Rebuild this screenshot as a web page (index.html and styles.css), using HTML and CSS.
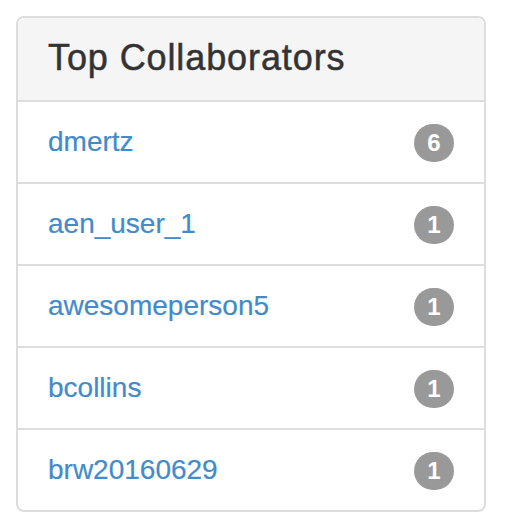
FILE: index.html
```html
<!DOCTYPE html>
<html>
<head>
<meta charset="utf-8">
<link rel="stylesheet" href="styles.css">
</head>
<body>
<div class="panel">
  <div class="panel-heading"><h3 class="panel-title">Top Collaborators</h3></div>
  <ul class="list">
    <li class="item"><a class="user" href="#">dmertz</a><span class="badge">6</span></li>
    <li class="item"><a class="user" href="#">aen_user_1</a><span class="badge">1</span></li>
    <li class="item"><a class="user" href="#">awesomeperson5</a><span class="badge">1</span></li>
    <li class="item"><a class="user" href="#">bcollins</a><span class="badge">1</span></li>
    <li class="item"><a class="user" href="#">brw20160629</a><span class="badge">1</span></li>
  </ul>
</div>
</body>
</html>
```
FILE: styles.css
```css
html, body {
  margin: 0;
  padding: 0;
  background: #fff;
}
body {
  padding: 16px;
  font-family: "Liberation Sans", Arial, sans-serif;
}
.panel {
  box-sizing: border-box;
  width: 470px;
  border: 2px solid #dddddd;
  border-radius: 8px;
  overflow: hidden;
  background: #fff;
}
.panel-heading {
  background: #f5f5f5;
  border-bottom: 2px solid #dddddd;
  padding: 19px 30px 21px;
}
.panel-title {
  margin: 0;
  font-size: 36px;
  line-height: 42px;
  font-weight: normal;
  letter-spacing: 0.9px;
  -webkit-text-stroke: 0.5px #333333;
  color: #333333;
}
.list {
  list-style: none;
  margin: 0;
  padding: 0;
}
.item {
  display: flex;
  align-items: center;
  justify-content: space-between;
  padding: 20px 30px;
  height: 40px;
  border-top: 2px solid #dddddd;
}
.item:first-child {
  border-top: none;
}
.user {
  font-size: 28px;
  line-height: 40px;
  color: #428bca;
  text-decoration: none;
  -webkit-text-stroke: 0.2px #428bca;
}
.badge {
  width: 40px;
  height: 38px;
  border-radius: 20px;
  background: #999999;
  color: #fff;
  font-weight: bold;
  font-size: 24px;
  display: flex;
  align-items: center;
  justify-content: center;
  margin-top: 1px;
}
```
